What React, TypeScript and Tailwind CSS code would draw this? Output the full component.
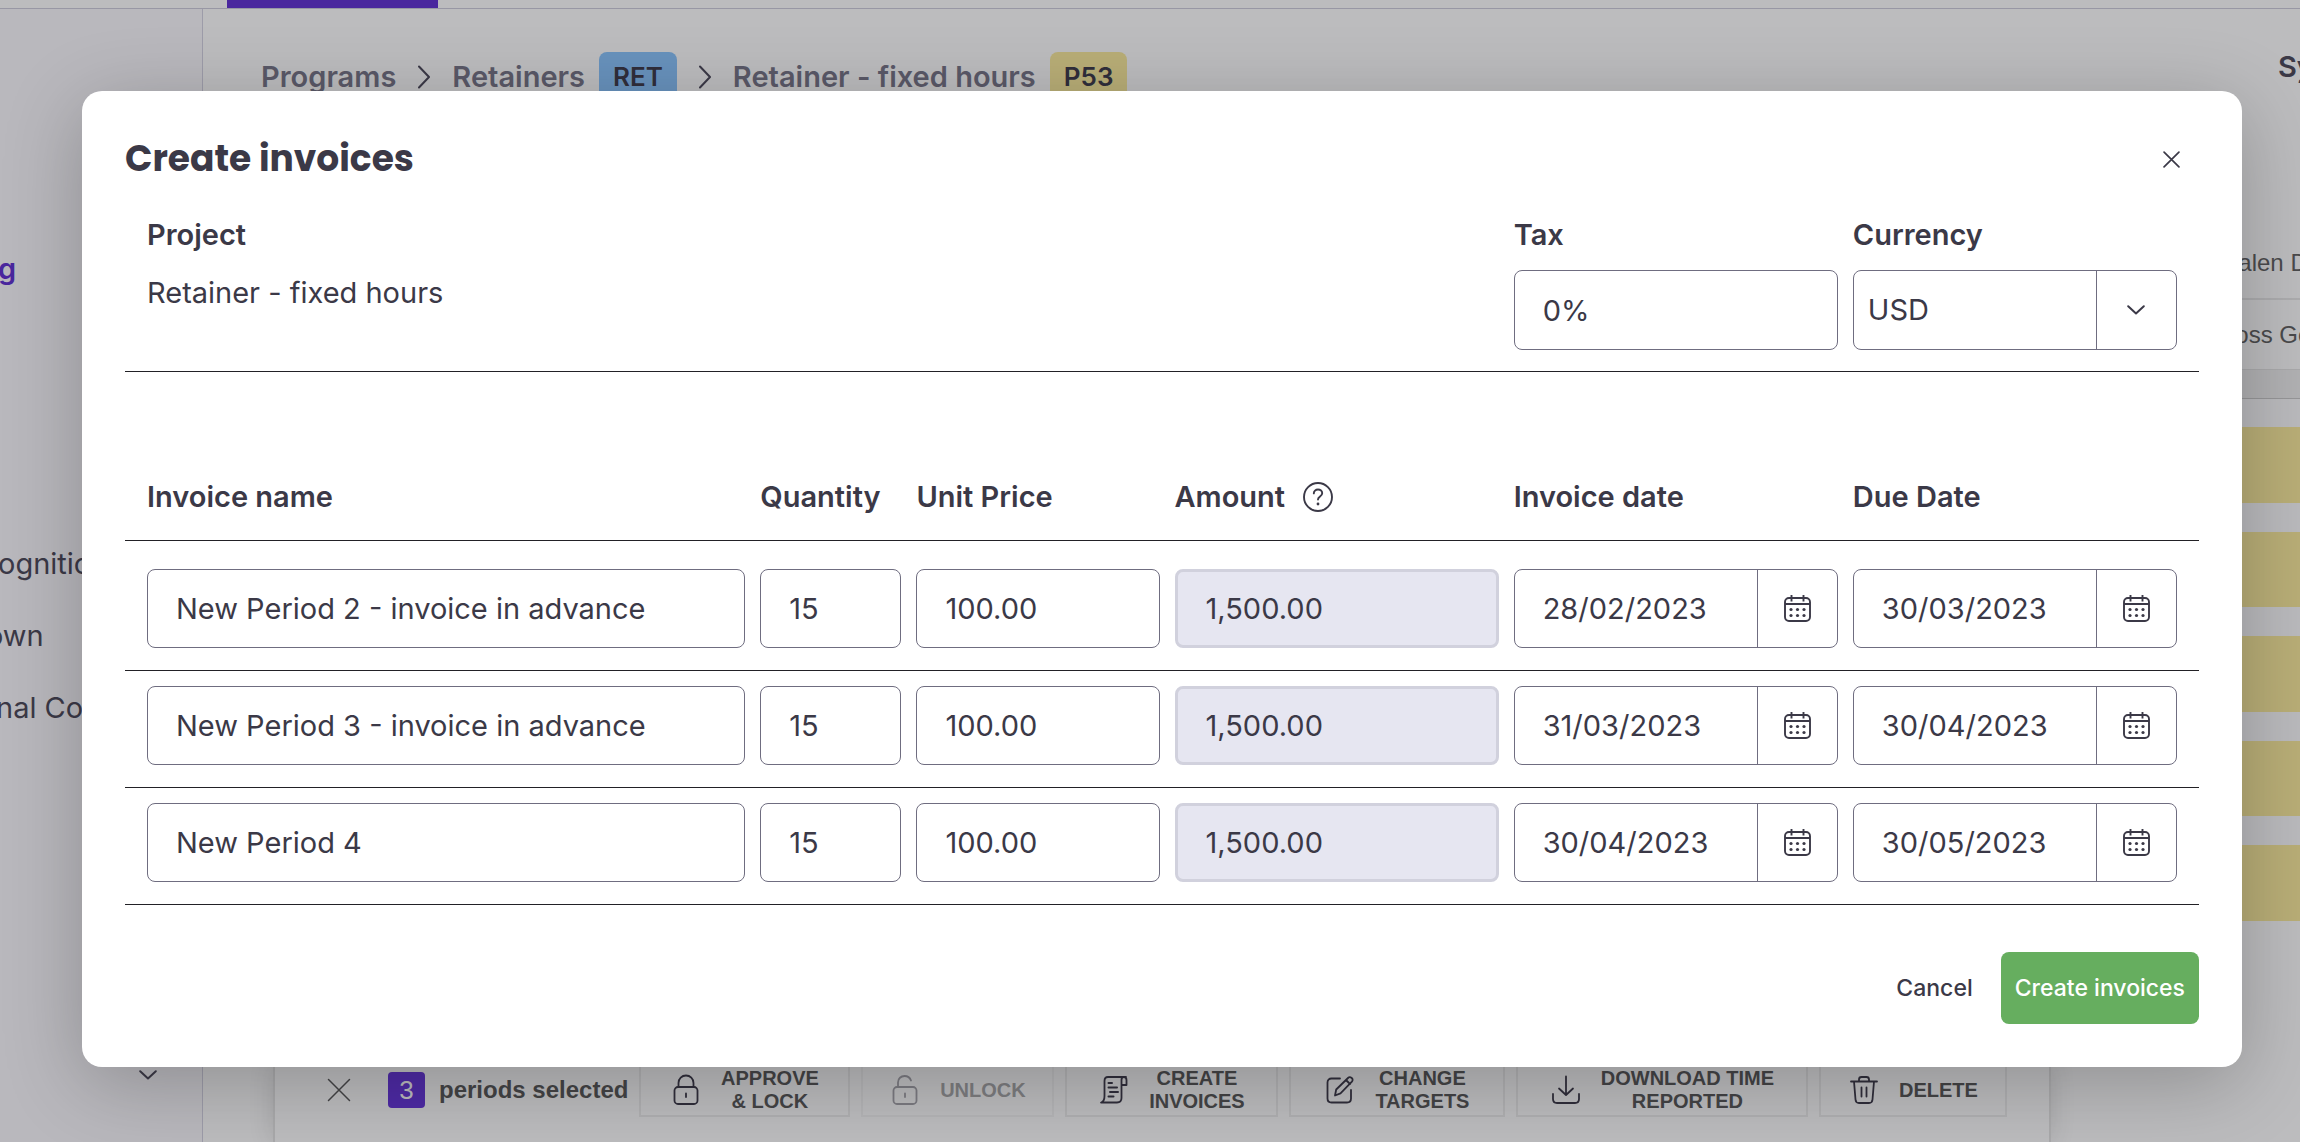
import React, { useState } from "react";

interface InvoiceRow {
  id: number;
  name: string;
  quantity: string;
  unitPrice: string;
  amount: string;
  invoiceDate: string;
  dueDate: string;
}

const initialRows: InvoiceRow[] = [
  {
    id: 2,
    name: "New Period 2 - invoice in advance",
    quantity: "15",
    unitPrice: "100.00",
    amount: "1,500.00",
    invoiceDate: "28/02/2023",
    dueDate: "30/03/2023",
  },
  {
    id: 3,
    name: "New Period 3 - invoice in advance",
    quantity: "15",
    unitPrice: "100.00",
    amount: "1,500.00",
    invoiceDate: "31/03/2023",
    dueDate: "30/04/2023",
  },
  {
    id: 4,
    name: "New Period 4",
    quantity: "15",
    unitPrice: "100.00",
    amount: "1,500.00",
    invoiceDate: "30/04/2023",
    dueDate: "30/05/2023",
  },
];

// Shared by the project details and the table so the columns line up
const gridCols = "grid grid-cols-[598fr_141fr_243fr_324fr_324fr_324fr] gap-x-[15px] px-[22px] [&>*]:min-w-0";

const fieldBox = "w-full min-w-0 rounded-lg border border-[#6f6d80] bg-white";

function CloseIcon({ className }: { className: string }) {
  return (
    <svg viewBox="0 0 16 16" className={className} fill="none" stroke="currentColor" strokeLinecap="round">
      <path d="M1 1l14 14M15 1L1 15" />
    </svg>
  );
}

function ChevronDownIcon() {
  return (
    <svg viewBox="0 0 18 10" className="w-[18px] h-[10px]" fill="none" stroke="currentColor" strokeWidth="2" strokeLinecap="round" strokeLinejoin="round">
      <path d="M1.2 1.2L9 8.5l7.800-7.300" />
    </svg>
  );
}

function ChevronRightIcon() {
  return (
    <svg viewBox="0 0 12 24" className="w-3 h-6" fill="none" stroke="currentColor" strokeWidth="2" strokeLinecap="round" strokeLinejoin="round">
      <path d="M1 1.500L11 12L1 22.500" />
    </svg>
  );
}

function CalendarIcon() {
  return (
    <svg viewBox="0 0 27 27" className="w-[27px] h-[27px]" fill="none" stroke="currentColor" strokeWidth="1.900">
      <rect x="1" y="3" width="25" height="23" rx="4" />
      <path d="M1 9h25M7.500 0v6.500M19.500 0v6.500" />
      <g fill="currentColor" stroke="none">
        <circle cx="7" cy="14.500" r="1.600" />
        <circle cx="13.500" cy="14.500" r="1.600" />
        <circle cx="20" cy="14.500" r="1.600" />
        <circle cx="7" cy="20.500" r="1.600" />
        <circle cx="13.500" cy="20.500" r="1.600" />
        <circle cx="20" cy="20.500" r="1.600" />
      </g>
    </svg>
  );
}

function HelpIcon() {
  return (
    <svg viewBox="0 0 30 30" className="w-[30px] h-[30px]" fill="none" stroke="currentColor" strokeWidth="1.900" strokeLinecap="round">
      <circle cx="15" cy="15" r="14" />
      <path d="M10.800 11.400c0-2.300 1.800-3.900 4.200-3.900s4.200 1.600 4.200 3.800c0 3.200-4.200 3.300-4.200 6.300" />
      <circle cx="15" cy="22" r="1.400" fill="currentColor" stroke="none" />
    </svg>
  );
}

const actionSvg = {
  viewBox: "0 0 30 32",
  className: "w-[30px] h-8 shrink-0",
  fill: "none",
  stroke: "currentColor",
  strokeWidth: 1.8,
  strokeLinecap: "round" as const,
  strokeLinejoin: "round" as const,
};

function LockIcon() {
  return (
    <svg {...actionSvg}>
      <rect x="3.500" y="13" width="23" height="17" rx="3.500" />
      <path d="M7.500 13V9a7.500 7.500 0 0 1 15 0v4M15 19.500v3.500" />
    </svg>
  );
}

function UnlockIcon() {
  return (
    <svg {...actionSvg}>
      <rect x="3.500" y="13" width="23" height="17" rx="3.500" />
      <path d="M8 13V8.500c0-4 3-6.500 6.500-6.500 3.200 0 5.500 1.800 6.500 4.500M15 19.500v3.500" />
    </svg>
  );
}

function InvoiceIcon() {
  return (
    <svg {...actionSvg}>
      <path d="M27 3H9C6.500 3 5.500 4.500 5.500 7v15c0 3.500-.8 5.800-3.500 6.500h16c2.500 0 4.500-1.500 4.500-4.500V6c0-2 .8-3 2.200-3s2.800 1 2.800 3v5h-5" />
      <path d="M9.500 9h3.500M9.500 13.500h8.500M11 18h8M9.500 22.500h5" strokeWidth="2" />
    </svg>
  );
}

function EditIcon() {
  return (
    <svg {...actionSvg}>
      <path d="M15 4.500H6.500C4 4.500 2.500 6 2.500 8.500v16C2.500 27 4 28.500 6.500 28.500h15.500c2.500 0 4-1.500 4-4V16" />
      <path d="M10 21.500l1.200-6L23 4c1-1 2.500-1 3.700 0s1.200 2.600.2 3.700L15.500 19.300zM21 6l4 4" />
    </svg>
  );
}

function DownloadIcon() {
  return (
    <svg {...actionSvg}>
      <path d="M15 2.500v18M8 14.500l7 6.500 7-6.500M2 20v5c0 2.500 1.500 4 4 4h18c2.500 0 4-1.500 4-4v-5" />
    </svg>
  );
}

function TrashIcon() {
  return (
    <svg {...actionSvg}>
      <path d="M2 7.500h26M10 7.500V5.500C10 4 11 3 12.500 3h5C19 3 20 4 20 5.500v2M5 7.500l1.500 18c.2 2.300 1.500 3.500 3.500 3.500h10c2 0 3.300-1.200 3.500-3.500l1.500-18M12.500 13.500v9M17.500 13.500v9" />
    </svg>
  );
}

interface ActionProps {
  icon: React.ReactNode;
  lines: string[];
  width: string;
  disabled?: boolean;
}

function ActionButton({ icon, lines, width, disabled }: ActionProps) {
  return (
    <button
      disabled={disabled}
      className={`flex h-[54px] shrink-0 items-center justify-center gap-5 border-2 border-[#b0b0b2] text-[20px] font-bold leading-[23px] text-[#444446] disabled:border-[#b5b5b7] disabled:text-[#7e7e81] ${width}`}
    >
      <span className={disabled ? "text-[#7c7b82]" : "text-[#302e3b]"}>{icon}</span>
      <span>
        {lines.map((line) => (
          <span key={line} className="block whitespace-nowrap">
            {line}
          </span>
        ))}
      </span>
    </button>
  );
}

function DateField({ label, value }: { label: string; value: string }) {
  return (
    <div className={`${fieldBox} flex h-[79px]`}>
      <input aria-label={label} defaultValue={value} className="min-w-0 flex-1 bg-transparent pl-[28px] outline-none" />
      <button
        aria-label={`Pick ${label.toLowerCase()}`}
        className="flex w-[80px] shrink-0 items-center justify-center border-l border-[#6f6d80]"
      >
        <CalendarIcon />
      </button>
    </div>
  );
}

function BackgroundPage() {
  return (
    <div className="flex h-full flex-col bg-[#bcbcbe]">
      {/* Top navigation */}
      <div className="h-[9px] shrink-0 border-b border-[#9897a4] pl-[227px]">
        <div className="h-2 w-[211px] bg-[#4a279e]" />
      </div>

      <div className="flex min-h-0 flex-1">
        {/* Sidebar, scrolled a little to the right */}
        <aside className="flex w-[203px] shrink-0 flex-col overflow-hidden whitespace-nowrap border-r border-[#9d9ca9] bg-[#b9b8bd] text-[29px] leading-9 text-[#3b3947]">
          <a href="#" className="-ml-0.5 mt-[242px] font-semibold text-[#4a279e]">g</a>
          <a href="#" className="-ml-0.5 mt-[259px]">ognition</a>
          <a href="#" className="-ml-3.5 mt-9">own</a>
          <a href="#" className="-ml-1 mt-9">nal Costs</a>
          <button aria-label="Expand" className="mb-[62px] ml-[139px] mt-auto w-[18px]">
            <ChevronDownIcon />
          </button>
        </aside>

        <main className="flex min-w-0 flex-1 flex-col">
          {/* Breadcrumb */}
          <nav className="ml-[58px] mt-[43px] flex h-[50px] items-center whitespace-nowrap text-[29px] font-semibold text-[#5a5968]">
            <a href="#">Programs</a>
            <span className="mx-[22px] text-[#3b3947]"><ChevronRightIcon /></span>
            <a href="#">Retainers</a>
            <span className="ml-[14px] rounded-lg bg-[#6892bd] px-[14px] text-[26px] leading-[50px] text-[#302e3b]">RET</span>
            <span className="mx-[22px] text-[#3b3947]"><ChevronRightIcon /></span>
            <a href="#">Retainer - fixed hours</a>
            <span className="ml-[14px] rounded-lg bg-[#b9ae77] px-[14px] text-[26px] leading-[50px] text-[#302e3b]">P53</span>
          </nav>

          {/* Selection toolbar */}
          <div className="ml-[70px] mr-[149px] mt-auto flex items-center whitespace-nowrap border-l-2 border-r-2 border-[#a9a9ab] pb-[25px] pl-[52px] font-['Liberation_Sans',sans-serif] text-[#444446] shadow-[0_0_24px_rgba(0,0,0,0.120)]">
            <button aria-label="Clear selection">
              <CloseIcon className="w-6 h-6" />
            </button>
            <span className="ml-[37px] h-9 w-[37px] rounded bg-[#4e2aa5] text-center text-[26px] leading-9 text-[#bcbcbe]">3</span>
            <span className="ml-[14px] mr-[11px] text-[24px] font-bold">periods selected</span>
            <div className="flex gap-[11px]">
              <ActionButton width="w-[211px]" icon={<LockIcon />} lines={["APPROVE", "& LOCK"]} />
              <ActionButton width="w-[193px]" icon={<UnlockIcon />} lines={["UNLOCK"]} disabled />
              <ActionButton width="w-[213px]" icon={<InvoiceIcon />} lines={["CREATE", "INVOICES"]} />
              <ActionButton width="w-[216px]" icon={<EditIcon />} lines={["CHANGE", "TARGETS"]} />
              <ActionButton width="w-[292px]" icon={<DownloadIcon />} lines={["DOWNLOAD TIME", "REPORTED"]} />
              <ActionButton width="w-[188px]" icon={<TrashIcon />} lines={["DELETE"]} />
            </div>
          </div>
        </main>

        {/* Right panel */}
        <aside className="w-[100px] shrink-0 overflow-hidden whitespace-nowrap">
          <div className="ml-[78px] mt-[40px] text-[29px] font-semibold leading-9 text-[#3b3947]">System</div>
          <div className="mt-[142px] font-['Liberation_Sans',sans-serif] text-[24px] text-[#4a4a4c]">
            <div className="h-[73px] border-b-2 border-[#acacae] pl-[21px] leading-[72px]">Dalen Doe</div>
            <div className="h-[70px] border-b border-[#a9a9ab] pl-[18px] leading-[70px]">Ross Geller</div>
            <div className="h-[29px] border-b border-[#969698] bg-[#b1b1b3]" />
          </div>
          <div className="flex flex-col gap-[29px] bg-[#bababd] pt-[28px]">
            <div className="h-[76px] bg-[#b9ae77]" />
            <div className="h-[75px] bg-[#b9ae77]" />
            <div className="h-[76px] bg-[#b9ae77]" />
            <div className="h-[75px] bg-[#b9ae77]" />
            <div className="h-[76px] bg-[#b9ae77]" />
          </div>
        </aside>
      </div>
    </div>
  );
}

export default function App() {
  const [rows] = useState<InvoiceRow[]>(initialRows);

  return (
    <div className="relative h-screen overflow-hidden font-[Inter,sans-serif]">
      <BackgroundPage />

      {/* Modal */}
      <div className="absolute inset-0 pb-[75px] pl-[82px] pr-[58px] pt-[91px]">
        <div
          role="dialog"
          aria-labelledby="dialog-title"
          className="rounded-[20px] bg-white px-[43px] pb-[43px] pt-10 text-[29px] leading-9 text-[#3b3947] shadow-[0_16px_80px_rgba(0,0,0,0.240)]"
        >
          <div className="flex h-14 items-center justify-between">
            <h2 id="dialog-title" className="font-[Poppins,Inter,sans-serif] text-[36px] font-bold">
              Create invoices
            </h2>
            <button aria-label="Close" className="flex h-14 w-14 items-center justify-center">
              <CloseIcon className="w-[17px] h-[17px] stroke-[1.6]" />
            </button>
          </div>

          {/* Project details */}
          <div className={`${gridCols} border-b border-[#222126] pb-[21px] pt-[30px]`}>
            <div className="col-span-4">
              <div className="font-semibold">Project</div>
              <div className="mt-[22px]">Retainer - fixed hours</div>
            </div>
            <div>
              <label htmlFor="tax" className="block font-semibold">Tax</label>
              <input id="tax" defaultValue="0%" className={`${fieldBox} mt-[17px] block h-[80px] px-[28px]`} />
            </div>
            <div>
              <label htmlFor="currency" className="block font-semibold">Currency</label>
              <div className={`${fieldBox} relative mt-[17px] flex h-[80px]`}>
                <select id="currency" defaultValue="USD" className="w-full appearance-none bg-transparent pl-[14px]">
                  <option>USD</option>
                  <option>EUR</option>
                  <option>GBP</option>
                </select>
                <span className="pointer-events-none absolute inset-y-0 right-0 flex w-[80px] items-center justify-center border-l border-[#6f6d80]">
                  <ChevronDownIcon />
                </span>
              </div>
            </div>
          </div>

          {/* Invoices */}
          <table className="block w-full">
            <thead className="block">
              <tr className={`${gridCols} whitespace-nowrap border-b border-[#222126] pb-[25px] pt-[107px] text-left`}>
                <th className="font-semibold">Invoice name</th>
                <th className="font-semibold">Quantity</th>
                <th className="font-semibold">Unit Price</th>
                <th className="flex items-center gap-[18px] font-semibold">
                  Amount
                  <button aria-label="About the amount">
                    <HelpIcon />
                  </button>
                </th>
                <th className="font-semibold">Invoice date</th>
                <th className="font-semibold">Due Date</th>
              </tr>
            </thead>
            <tbody className="block">
              {rows.map((row) => (
                <tr key={row.id} className={`${gridCols} border-b border-[#222126] pb-[22px] pt-[15px] first:pt-[28px]`}>
                  <td>
                    <input aria-label="Invoice name" defaultValue={row.name} className={`${fieldBox} block h-[79px] px-[28px]`} />
                  </td>
                  <td>
                    <input aria-label="Quantity" defaultValue={row.quantity} className={`${fieldBox} block h-[79px] px-[28px]`} />
                  </td>
                  <td>
                    <input aria-label="Unit price" defaultValue={row.unitPrice} className={`${fieldBox} block h-[79px] px-[28px]`} />
                  </td>
                  <td>
                    <input
                      aria-label="Amount"
                      value={row.amount}
                      disabled
                      className="block h-[79px] w-full min-w-0 rounded-lg border-[3px] border-[#d1d1dd] bg-[#e6e6f1] px-[28px]"
                    />
                  </td>
                  <td>
                    <DateField label="Invoice date" value={row.invoiceDate} />
                  </td>
                  <td>
                    <DateField label="Due date" value={row.dueDate} />
                  </td>
                </tr>
              ))}
            </tbody>
          </table>

          <div className="mt-[47px] flex h-[72px] items-center justify-end gap-[14px] text-[23px] font-medium">
            <button className="h-full px-[14px]">Cancel</button>
            <button className="h-full rounded-lg bg-[#66ae5f] px-[14px] text-white">Create invoices</button>
          </div>
        </div>
      </div>
    </div>
  );
}
